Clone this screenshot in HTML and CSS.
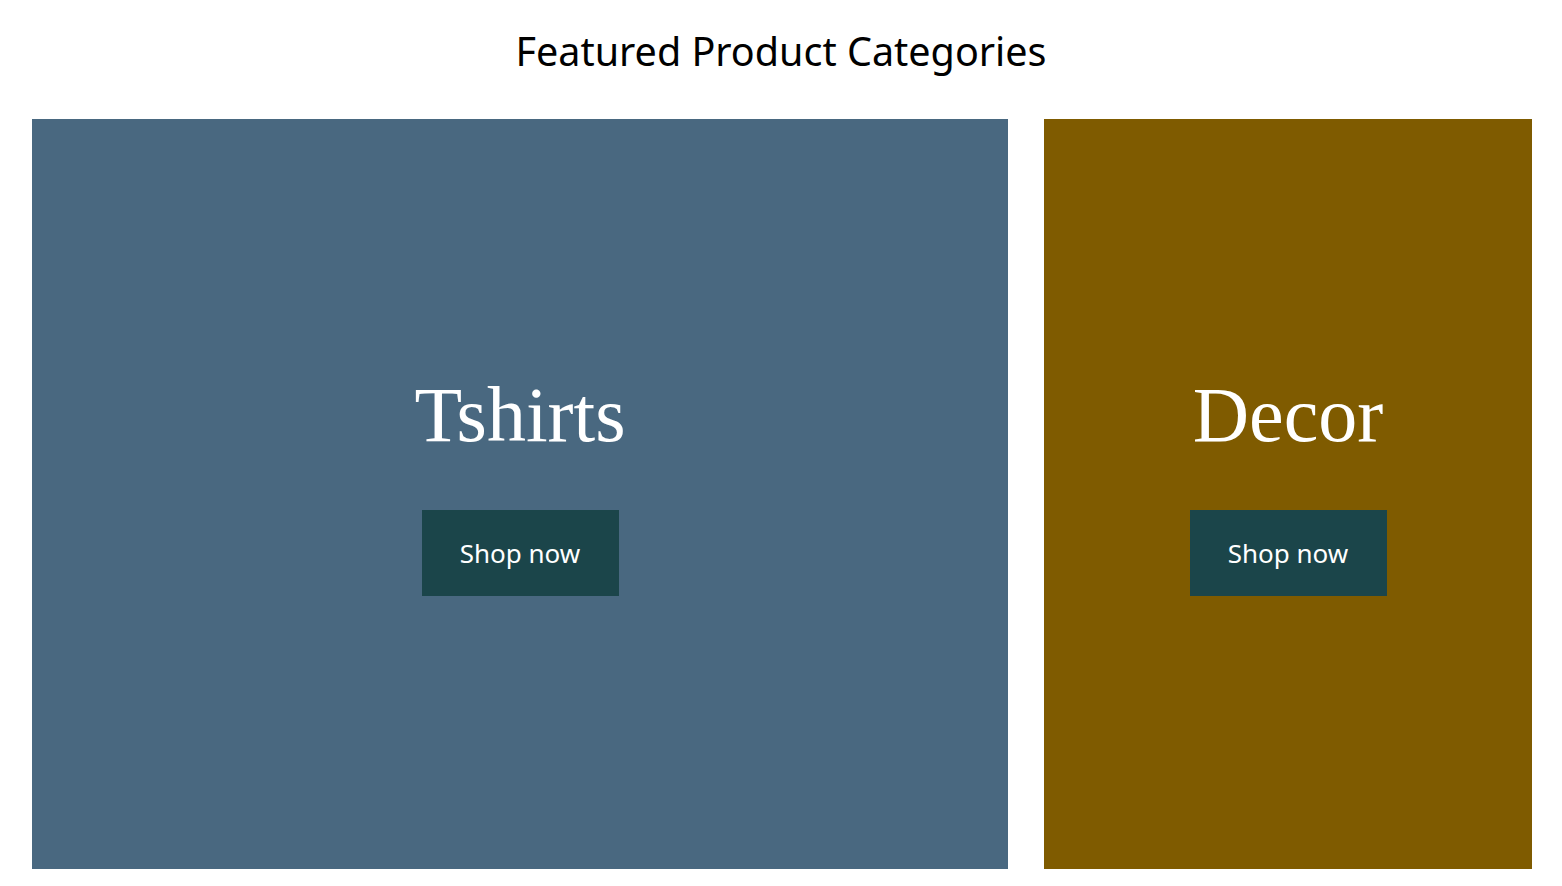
FILE: index.html
```html
<!DOCTYPE html>
<html lang="en">
<head>
<meta charset="utf-8">
<title>Featured Product Categories</title>
<link rel="stylesheet" href="styles.css">
</head>
<body>
<main class="page">
  <h1 class="page-title">Featured Product Categories</h1>
  <section class="categories">
    <article class="category category--tshirts">
      <h2 class="category-name">Tshirts</h2>
      <a class="shop-btn" href="#">Shop now</a>
    </article>
    <article class="category category--decor">
      <h2 class="category-name">Decor</h2>
      <a class="shop-btn" href="#">Shop now</a>
    </article>
  </section>
</main>
</body>
</html>
```

FILE: styles.css
```css
html, body {
  margin: 0;
  padding: 0;
  background: #ffffff;
}

.page {
  font-family: "Noto Sans", "Open Sans", sans-serif;
  color: #000;
}

.page-title {
  margin: 0;
  padding-top: 24px;
  height: 119px;
  box-sizing: border-box;
  text-align: center;
  font-weight: 400;
  font-size: 39.5px;
  line-height: 54px;
}

.categories {
  display: grid;
  grid-template-columns: 2fr 1fr;
  gap: 36px;
  padding: 0 30px 0 32px;
}

.category {
  height: 750px;
  display: flex;
  flex-direction: column;
  align-items: center;
  justify-content: center;
  padding-bottom: 22px;
  box-sizing: border-box;
}

.category--tshirts {
  background: #496880;
}

.category--decor {
  background: #7f5b00;
}

.category-name {
  margin: 0 0 50px;
  font-family: "Liberation Serif", "Times New Roman", serif;
  font-weight: 400;
  font-size: 78px;
  line-height: 90px;
  color: #ffffff;
}

.shop-btn {
  display: flex;
  align-items: center;
  justify-content: center;
  width: 197px;
  height: 86px;
  background: #1b454a;
  color: #ffffff;
  text-decoration: none;
  font-size: 26px;
}
```
